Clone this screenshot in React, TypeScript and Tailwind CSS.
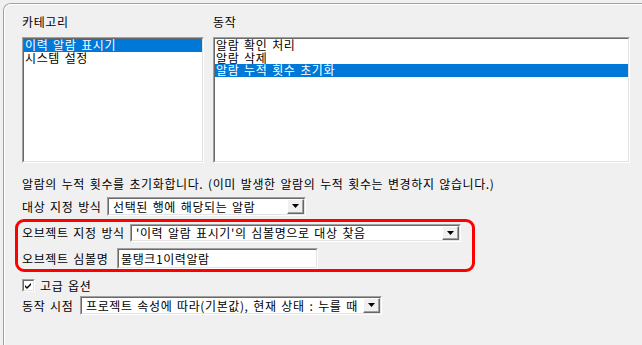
import React from "react";

const font = { fontFamily: '"Noto Sans CJK KR", "Noto Sans", sans-serif' };

function Sunken({ className, children }: { className: string; children?: React.ReactNode }) {
  return (
    <div className={`border border-t-[#a0a0a0] border-l-[#a0a0a0] border-r-white border-b-white ${className}`}>
      <div className="h-full w-full border border-t-[#696969] border-l-[#696969] border-r-[#e3e3e3] border-b-[#e3e3e3] bg-white">
        {children}
      </div>
    </div>
  );
}

function ListBox({ items, selected, className }: { items: string[]; selected: number; className: string }) {
  return (
    <Sunken className={className}>
      <div className="flex flex-col">
        {items.map((item, i) => (
          <div
            key={item}
            className={`h-[12.5px] whitespace-nowrap pl-[1px] text-[12px] leading-[12px] ${
              i === selected ? "bg-[#0078d7] text-white" : "text-black"
            }`}
          >
            {item}
          </div>
        ))}
      </div>
    </Sunken>
  );
}

function Combo({ value, className }: { value: string; className: string }) {
  return (
    <Sunken className={className}>
      <div className="flex h-full items-center">
        <div className="flex-1 overflow-hidden whitespace-nowrap pl-[4px] text-[12px] leading-[14px] text-black">{value}</div>
        <div className="h-full w-[17px] shrink-0 border border-t-white border-l-white border-r-[#696969] border-b-[#696969] bg-[#f0f0f0]">
          <div className="flex h-full items-center justify-center border-r border-b border-r-[#a0a0a0] border-b-[#a0a0a0]">
            <svg width="7" height="4" viewBox="0 0 7 4">
              <path d="M0 0H7L3.5 4Z" fill="#000" />
            </svg>
          </div>
        </div>
      </div>
    </Sunken>
  );
}

export default function App() {
  return (
    <div
      className="h-[345px] overflow-hidden bg-[#f0f0f0] pl-[3px] pt-[3px] tracking-[0.6px] text-black [word-spacing:1.5px]"
      style={font}
    >
      <div className="h-[342px] rounded-tl-[8px] border-l border-t border-[#a0a0a0]">
        <div className="h-full rounded-tl-[7px] border-l border-t border-white pl-[17px] pt-[10px]">
          <div className="flex gap-[9px]">
            <div className="flex flex-col">
              <div className="h-[14px] text-[12px] leading-[14px]">카테고리</div>
              <ListBox className="mt-[8px] h-[126px] w-[182px]" items={["이력 알람 표시기", "시스템 설정"]} selected={0} />
            </div>
            <div className="flex flex-col">
              <div className="h-[14px] text-[12px] leading-[14px]">동작</div>
              <ListBox
                className="mt-[8px] h-[126px] w-[417px]"
                items={["알람 확인 처리", "알람 삭제", "알람 누적 횟수 초기화"]}
                selected={2}
              />
            </div>
          </div>

          <div className="mt-[14px] h-[14px] whitespace-nowrap text-[12px] leading-[14px]">
            알람의 누적 횟수를 초기화합니다. (이미 발생한 알람의 누적 횟수는 변경하지 않습니다.)
          </div>

          <div className="mt-[6px] flex h-[19px] items-center">
            <div className="w-[85px] shrink-0 whitespace-nowrap text-[12px] leading-[14px]">대상 지정 방식</div>
            <Combo className="h-[19px] w-[199px]" value="선택된 행에 해당되는 알람" />
          </div>

          <div className="-ml-[7px] mt-[3px] w-[460px] rounded-[9px] border-[3px] border-[#ff0000] pl-[4px] pt-[2px]">
            <div className="flex h-[18px] items-center">
              <div className="w-[108px] shrink-0 whitespace-nowrap text-[12px] leading-[14px]">오브젝트 지정 방식</div>
              <Combo className="h-[18px] w-[331px]" value="'이력 알람 표시기'의 심볼명으로 대상 찾음" />
            </div>
            <div className="mt-[6px] flex h-[21px] items-center">
              <div className="w-[95px] shrink-0 whitespace-nowrap text-[12px] leading-[14px]">오브젝트 심볼명</div>
              <Sunken className="h-[21px] w-[201px]">
                <div className="flex h-full items-center pl-[2px] text-[12px] leading-[14px]">물탱크1이력알람</div>
              </Sunken>
            </div>
          </div>

          <div className="mt-[7px] flex h-[13px] items-center">
            <Sunken className="h-[13px] w-[13px]">
              <svg width="9" height="9" viewBox="0 0 9 9" className="block">
                <path d="M1 4L3 6L7 2V4L3 8L1 6Z" fill="#000" />
              </svg>
            </Sunken>
            <div className="ml-[5px] whitespace-nowrap text-[12px] leading-[14px]">고급 옵션</div>
          </div>

          <div className="mt-[4px] flex h-[19px] items-center">
            <div className="w-[58px] shrink-0 whitespace-nowrap text-[12px] leading-[14px]">동작 시점</div>
            <Combo className="h-[19px] w-[302px]" value="프로젝트 속성에 따라(기본값), 현재 상태 : 누를 때" />
          </div>
        </div>
      </div>
    </div>
  );
}
